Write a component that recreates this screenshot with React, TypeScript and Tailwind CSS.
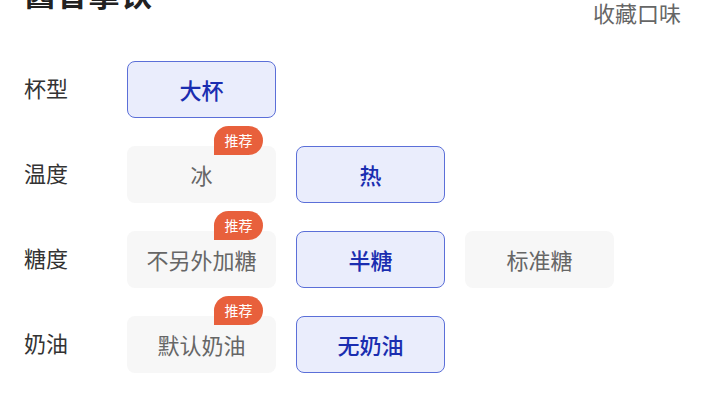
import React from 'react'

interface Option {
  label: string
  selected?: boolean
  recommended?: boolean
}

interface Group {
  name: string
  options: Option[]
}

const groups: Group[] = [
  { name: '杯型', options: [{ label: '大杯', selected: true }] },
  {
    name: '温度',
    options: [
      { label: '冰', recommended: true },
      { label: '热', selected: true },
    ],
  },
  {
    name: '糖度',
    options: [
      { label: '不另外加糖', recommended: true },
      { label: '半糖', selected: true },
      { label: '标准糖' },
    ],
  },
  {
    name: '奶油',
    options: [
      { label: '默认奶油', recommended: true },
      { label: '无奶油', selected: true },
    ],
  },
]

const OptionButton: React.FC<{ option: Option }> = ({ option }) => {
  return (
    <div
      className={
        option.selected
          ? 'relative flex h-[57px] w-[149px] items-center justify-center rounded-lg border-[1.5px] border-[#5b6fd8] bg-[#eaedfc] text-[22px] font-medium text-[#1a2db0]'
          : 'relative flex h-[57px] w-[149px] items-center justify-center rounded-lg bg-[#f7f7f7] text-[22px] text-[#666666]'
      }
    >
      {option.label}
      {option.recommended && (
        <span className="absolute right-[13px] top-[-20px] flex h-[29px] w-[49px] items-center justify-center rounded-full rounded-bl-none bg-[#e8603c] text-[14px] text-white">
          推荐
        </span>
      )}
    </div>
  )
}

export default function App() {
  return (
    <div
      className="h-[405px] w-[720px] overflow-hidden bg-white"
      style={{ fontFamily: '"Noto Sans CJK SC", "Noto Sans", sans-serif' }}
    >
      <div className="flex items-start justify-between pl-6 pr-[39px]">
        <h1 className="-mt-[28px] text-[32px] font-bold leading-[40px] text-[#222222]">酱香拿铁</h1>
        <span className="-mt-[2px] text-[22px] leading-[28px] text-[#666666]">收藏口味</span>
      </div>
      <div className="mt-[35px] flex flex-col gap-[28px] pl-6">
        {groups.map((group) => (
          <div key={group.name} className="flex items-center">
            <div className="-mt-[4px] w-[103px] text-[22px] text-[#333333]">{group.name}</div>
            <div className="flex gap-5">
              {group.options.map((option) => (
                <OptionButton key={option.label} option={option} />
              ))}
            </div>
          </div>
        ))}
      </div>
    </div>
  )
}
